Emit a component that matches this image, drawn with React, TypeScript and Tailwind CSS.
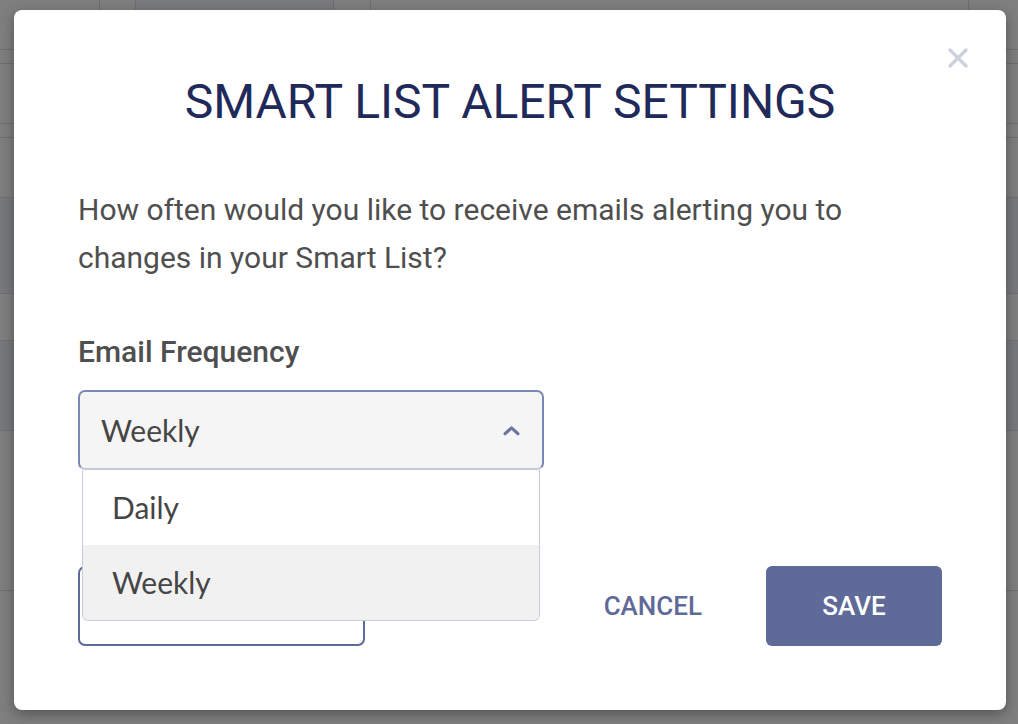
import React, { useState } from 'react'

const options = ['Daily', 'Weekly']

// faded page behind the overlay
const BackgroundPage = () => (
  <div className="h-[724px] w-full bg-[#7f7f7f] overflow-hidden">
    <div className="flex h-[50px] border-b border-[#6f6f72]">
      <div className="w-[100px] border-r border-[#6f6f72]" />
      <div className="w-[36px] border-r border-[#6f6f72]" />
      <div className="w-[198px] border-r border-[#6f6f72] bg-[#7a7b7e]" />
      <div className="w-[37px] border-r border-[#6f6f72]" />
      <div className="w-[598px] border-r border-[#6f6f72]" />
      <div className="flex-1" />
    </div>
    <div className="h-[14px] border-b border-[#6f6f72]" />
    <div className="h-[60px] border-b border-[#6f6f72]" />
    <div className="h-[14px] border-b border-[#6f6f72]" />
    <div className="h-[60px] border-b border-[#6f6f72]" />
    <div className="h-[96px] border-b border-[#6f6f72] bg-[#78797c]" />
    <div className="h-[47px] border-b border-[#6f6f72]" />
    <div className="h-[90px] border-b border-[#6f6f72] bg-[#78797c]" />
    <div className="h-[160px] border-b border-[#6f6f72]" />
    <div className="flex h-[100px]">
      <div className="w-[445px] border-r border-[#6f6f72]" />
      <div className="w-[286px] border-r border-[#6f6f72]" />
      <div className="flex-1" />
    </div>
  </div>
)

const App = () => {
  const [value, setValue] = useState('Weekly')
  const [open, setOpen] = useState(true)

  return (
    <div className="relative w-full h-[724px]" style={{ fontFamily: 'Roboto, "Liberation Sans", sans-serif' }}>
      <BackgroundPage />

      {/* Modal */}
      <div className="absolute left-[14px] top-[10px] w-[992px] h-[700px] bg-white rounded-[8px] shadow-[0_4px_14px_rgba(0,0,0,0.35)] px-[64px] pt-[64px]">
        <button className="absolute top-[38px] right-[38px] w-[20px] h-[20px] text-[#cdd0de]">
          <svg viewBox="0 0 20 20" width="20" height="20" fill="none" stroke="currentColor" strokeWidth="3.2" strokeLinecap="round">
            <path d="M2 2 L18 18 M18 2 L2 18" />
          </svg>
        </button>

        <h1 className="text-center text-[48px] leading-[56px] text-[#1f2a5a] font-normal">
          SMART LIST ALERT SETTINGS
        </h1>

        <p className="mt-[56px] text-[30px] leading-[48px] text-[#4f4f4f]">
          How often would you like to receive emails alerting you to
          <br />
          changes in your Smart List?
        </p>

        <div className="mt-[54px] text-[30px] leading-[32px] font-medium text-[#4f4f4f]">Email Frequency</div>

        {/* Select */}
        <div className="relative mt-[22px] w-[466px]">
          <button
            onClick={() => setOpen(!open)}
            className="flex items-center justify-between w-full h-[80px] pl-[21px] pr-[22px] bg-[#f5f5f5] border-2 border-[#7d87b3] border-b-[#c5c9dc] rounded-[7px] text-[30px] text-[#454545]"
            style={{ fontFamily: 'Lato, "Open Sans", sans-serif' }}
          >
            <span>{value}</span>
            <svg viewBox="0 0 16 10" width="17" height="11" fill="none" stroke="#6b75a0" strokeWidth="3" strokeLinecap="round" strokeLinejoin="round">
              <path d="M2 8 L8 2.5 L14 8" />
            </svg>
          </button>

          {open && (
            <div
              className="absolute top-full left-[4px] w-[458px] z-10 bg-white border border-t-0 border-[#c8cbdc] rounded-b-[6px] overflow-hidden"
              style={{ fontFamily: 'Lato, "Open Sans", sans-serif' }}
            >
              {options.map((opt) => (
                <div
                  key={opt}
                  onClick={() => {
                    setValue(opt)
                    setOpen(false)
                  }}
                  className={`h-[75px] flex items-center pl-[29px] text-[30px] text-[#454545] ${
                    opt === value ? 'bg-[#f1f1f1]' : 'bg-white'
                  }`}
                >
                  {opt}
                </div>
              ))}
            </div>
          )}
        </div>

        {/* Footer */}
        <div className="mt-[96px] flex items-center justify-between">
          <button className="w-[287px] h-[80px] border-2 border-[#5f6a98] rounded-[7px] bg-white" />
          <div className="flex items-center gap-[32px]">
            <button className="h-[80px] px-[32px] text-[26px] font-medium text-[#5f6a98]">CANCEL</button>
            <button className="w-[176px] h-[80px] rounded-[6px] bg-[#5f6a98] text-[26px] font-medium text-white">SAVE</button>
          </div>
        </div>
      </div>
    </div>
  )
}

export default App
